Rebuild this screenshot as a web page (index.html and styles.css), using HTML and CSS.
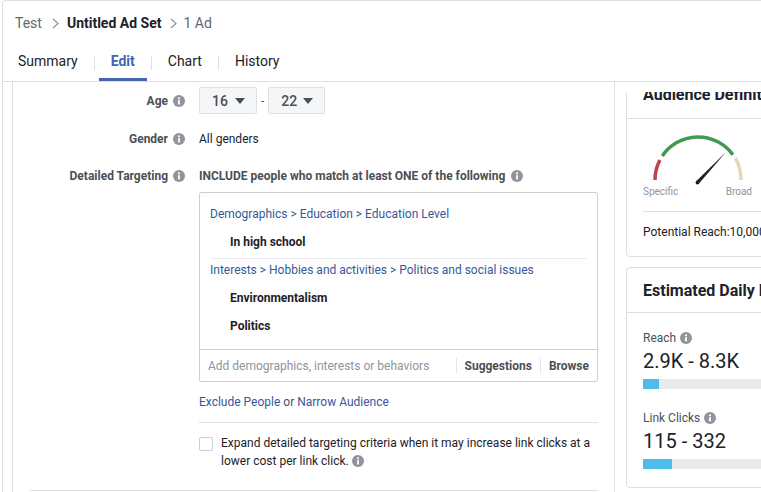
FILE: index.html
```html
<!DOCTYPE html>
<html>
<head>
<meta charset="utf-8">
<link rel="stylesheet" href="styles.css">
</head>
<body>
<div class="app">
  <header class="top">
    <div class="crumbs">
      <span class="crumb-muted">Test</span>
      <svg class="chev" width="7" height="11" viewBox="0 0 7 11"><polyline points="1,1 6,5.5 1,10" fill="none" stroke="#90949c" stroke-width="1.2"/></svg>
      <span class="crumb-strong">Untitled Ad Set</span>
      <svg class="chev chev2" width="7" height="11" viewBox="0 0 7 11"><polyline points="1,1 6,5.5 1,10" fill="none" stroke="#90949c" stroke-width="1.2"/></svg>
      <span class="crumb-muted">1 Ad</span>
    </div>
    <nav class="tabs">
      <span class="tab">Summary</span>
      <span class="tab-sep"></span>
      <span class="tab active">Edit</span>
      <span class="tab-sep"></span>
      <span class="tab">Chart</span>
      <span class="tab-sep"></span>
      <span class="tab">History</span>
    </nav>
  </header>

  <div class="main">
    <div class="left">
      <div class="card form">
        <div class="row row-age">
          <div class="lbl">Age <svg class="info" width="12" height="12" viewBox="0 0 12 12"><circle cx="6" cy="6" r="6" fill="#90949c"/><circle cx="6" cy="3.3" r="1.1" fill="#fff"/><rect x="5.1" y="5" width="1.8" height="4.6" rx="0.5" fill="#fff"/></svg></div>
          <div class="val age">
            <div class="select">16 <svg width="10" height="6" viewBox="0 0 10 6"><polygon points="0,0 10,0 5,6" fill="#4b4f56"/></svg></div>
            <span class="dash">-</span>
            <div class="select">22 <svg width="10" height="6" viewBox="0 0 10 6"><polygon points="0,0 10,0 5,6" fill="#4b4f56"/></svg></div>
          </div>
        </div>

        <div class="row row-gender">
          <div class="lbl">Gender <svg class="info" width="12" height="12" viewBox="0 0 12 12"><circle cx="6" cy="6" r="6" fill="#90949c"/><circle cx="6" cy="3.3" r="1.1" fill="#fff"/><rect x="5.1" y="5" width="1.8" height="4.6" rx="0.5" fill="#fff"/></svg></div>
          <div class="val plain">All genders</div>
        </div>

        <div class="row row-dt">
          <div class="lbl">Detailed Targeting <svg class="info" width="12" height="12" viewBox="0 0 12 12"><circle cx="6" cy="6" r="6" fill="#90949c"/><circle cx="6" cy="3.3" r="1.1" fill="#fff"/><rect x="5.1" y="5" width="1.8" height="4.6" rx="0.5" fill="#fff"/></svg></div>
          <div class="val">
            <div class="include">INCLUDE people who match at least ONE of the following <svg class="info" width="12" height="12" viewBox="0 0 12 12"><circle cx="6" cy="6" r="6" fill="#90949c"/><circle cx="6" cy="3.3" r="1.1" fill="#fff"/><rect x="5.1" y="5" width="1.8" height="4.6" rx="0.5" fill="#fff"/></svg></div>

            <div class="tbox">
              <div class="group g1">
                <div class="path">Demographics &gt; Education &gt; Education Level</div>
                <div class="item">In high school</div>
              </div>
              <div class="group g2">
                <div class="path">Interests &gt; Hobbies and activities &gt; Politics and social issues</div>
                <div class="item">Environmentalism</div>
                <div class="item">Politics</div>
              </div>
              <div class="tinput">
                <span class="ph">Add demographics, interests or behaviors</span>
                <span class="vsep"></span>
                <span class="act">Suggestions</span>
                <span class="vsep"></span>
                <span class="act">Browse</span>
              </div>
            </div>

            <div class="exclude"><span class="link">Exclude People</span> or <span class="link">Narrow Audience</span></div>
            <div class="hr"></div>
            <div class="expand">
              <span class="checkbox"></span>
              <p>Expand detailed targeting criteria when it may increase link clicks at a lower cost per link click. <svg class="info" width="12" height="12" viewBox="0 0 12 12"><circle cx="6" cy="6" r="6" fill="#90949c"/><circle cx="6" cy="3.3" r="1.1" fill="#fff"/><rect x="5.1" y="5" width="1.8" height="4.6" rx="0.5" fill="#fff"/></svg></p>
            </div>
          </div>
        </div>
        <div class="next-sep"></div>
      </div>
    </div>

    <div class="right">
      <div class="rclip">
        <div class="rstack">
          <section class="rcard">
            <h2 class="rhead">Audience Definition</h2>
            <div class="aud-body">
              <svg class="gauge" width="112" height="60" viewBox="0 0 112 60">
                <path d="M12 55 A43 43 0 0 1 16.9 35" fill="none" stroke="#b8474b" stroke-width="3.5"/>
                <path d="M19.3 31 A43 43 0 0 1 89.8 29.7" fill="none" stroke="#3f9a4f" stroke-width="3.5"/>
                <path d="M92.3 33.2 A43 43 0 0 1 98 55" fill="none" stroke="#e8d6b6" stroke-width="3.5"/>
                <polygon points="55.8,58.8 53.2,56.2 83,27" fill="#1d2129"/>
                <circle cx="54.5" cy="57.5" r="1.9" fill="#1d2129"/>
              </svg>
              <div class="gauge-labels"><span>Specific</span><span>Broad</span></div>
            </div>
            <div class="reach">Potential Reach:10,000,000 people</div>
          </section>

          <section class="rcard est">
            <h2 class="rhead">Estimated Daily Results</h2>
            <div class="est-body">
              <div class="metric">
                <div class="mlabel">Reach <svg class="info" width="12" height="12" viewBox="0 0 12 12"><circle cx="6" cy="6" r="6" fill="#90949c"/><circle cx="6" cy="3.3" r="1.1" fill="#fff"/><rect x="5.1" y="5" width="1.8" height="4.6" rx="0.5" fill="#fff"/></svg></div>
                <div class="mval">2.9K - 8.3K</div>
                <div class="bar"><div class="fill" style="width:16px"></div></div>
              </div>
              <div class="metric">
                <div class="mlabel">Link Clicks <svg class="info" width="12" height="12" viewBox="0 0 12 12"><circle cx="6" cy="6" r="6" fill="#90949c"/><circle cx="6" cy="3.3" r="1.1" fill="#fff"/><rect x="5.1" y="5" width="1.8" height="4.6" rx="0.5" fill="#fff"/></svg></div>
                <div class="mval">115 - 332</div>
                <div class="bar"><div class="fill" style="width:29px"></div></div>
              </div>
            </div>
          </section>
        </div>
      </div>
    </div>
  </div>
</div>
</body>
</html>
```

FILE: styles.css
```css
* { box-sizing: border-box; }
html, body { margin: 0; padding: 0; background: #fff; }
body {
  width: 761px;
  height: 492px;
  overflow: hidden;
  font-family: Roboto, "Liberation Sans", Arial, sans-serif;
  font-size: 12px;
  color: #1d2129;
}
.app { margin-left: 2px; width: 900px; }

/* header */
.top {
  border: 1px solid #dddfe2;
  border-right: none;
  border-top-left-radius: 4px;
  background: #fff;
}
.crumbs {
  display: flex;
  align-items: center;
  height: 43px;
  padding: 14px 0 13px 12px;
  font-size: 14px;
  line-height: 16px;
}
.crumb-muted { color: #606770; }
.crumb-strong { color: #1d2129; font-weight: 700; }
.chev { margin: 0 8px 0 10px; }
.chev2 { margin: 0 6px 0 9px; }

.tabs {
  display: flex;
  align-items: center;
  padding-left: 3px;
  height: 37px;
}
.tab {
  font-size: 14px;
  line-height: 16px;
  padding: 9px 12px 9px;
  border-bottom: 3px solid transparent;
  color: #1d2129;
}
.tab.active { color: #4267b2; font-weight: 700; border-bottom-color: #4267b2; }
.tab-sep { width: 1px; height: 14px; background: #dddfe2; margin: 0 4px 0 4px; }

/* main */
.main { display: flex; align-items: flex-start; }
.left {
  flex: none;
  width: 613px;
  height: 410px;
  border-left: 1px solid #dddfe2;
  padding-left: 9px;
}
.card.form {
  width: 603px;
  height: 410px;
  border-left: 1px solid #dddfe2;
  border-right: 1px solid #dddfe2;
  padding-top: 5px;
}
.row { display: flex; align-items: flex-start; }
.lbl {
  width: 172px;
  flex: none;
  display: flex;
  align-items: center;
  justify-content: flex-end;
  gap: 5px;
  color: #4b4f56;
  font-weight: 700;
  line-height: 16px;
}
.info { flex: none; display: inline-block; vertical-align: -2px; }
.val { margin-left: 14px; width: 399px; flex: none; }

.row-age .lbl { height: 27px; }
.age { display: flex; align-items: center; }
.select {
  display: flex;
  align-items: center;
  justify-content: space-between;
  height: 27px;
  width: 58px;
  padding: 0 11px 0 12px;
  background: #f5f6f7;
  border: 1px solid #dddfe2;
  border-radius: 2px;
  font-size: 14px;
  color: #4b4f56;
  font-weight: 500;
}
.select + .dash + .select { width: 57px; }
.dash { margin: 0 4px; color: #4b4f56; }

.row-gender { margin-top: 17px; }
.plain { line-height: 16px; color: #1d2129; }

.row-dt { margin-top: 21px; }
.include { color: #4b4f56; font-weight: 700; line-height: 16px; }
.include .info { margin-left: 3px; }

.tbox {
  margin-top: 8px;
  border: 1px solid #ccd0d5;
  border-radius: 2px;
}
.group { margin: 0 10px; }
.g1 { padding-top: 7px; padding-bottom: 2px; border-bottom: 1px solid #e9ebee; }
.g2 { padding-bottom: 9px; }
.path { color: #365899; line-height: 22px; padding: 3px 0; }
.g2 .path { padding-top: 0; }
.item { font-weight: 700; line-height: 28px; padding-left: 20px; color: #1d2129; }
.tinput {
  display: flex;
  align-items: center;
  height: 32px;
  border-top: 1px solid #ccd0d5;
  padding: 0 8px;
}
.ph { color: #90949c; flex: 1; }
.vsep { width: 1px; height: 16px; background: #e5e6e9; margin: 0 8px; }
.act { font-weight: 700; color: #4b4f56; }

.exclude { margin-top: 12px; line-height: 16px; color: #4b4f56; }
.link { color: #365899; }
.hr { height: 1px; background: #dddfe2; margin-top: 12px; }
.expand { display: flex; align-items: flex-start; margin-top: 11px; }
.checkbox {
  flex: none;
  width: 14px; height: 14px;
  border: 1px solid #ccd0d5;
  border-radius: 2px;
  margin-top: 3px;
}
.expand p {
  margin: 0 0 0 8px;
  line-height: 18px;
  color: #1d2129;
  font-size: 12px;
}
.next-sep { margin: 20px 0 0 17px; width: 568px; height: 1px; background: #dddfe2; }

/* right column */
.right { flex: none; width: 260px; padding: 10px 0 0 11px; }
.rclip { overflow: hidden; height: 420px; }
.rstack { margin-top: -23px; }
.rcard {
  border: 1px solid #dddfe2;
  border-radius: 4px;
  background: #fff;
  margin-bottom: 10px;
}
.rhead {
  margin: 0;
  height: 49px;
  padding: 0 16px;
  display: flex;
  align-items: center;
  font-size: 16px;
  font-weight: 700;
  color: #1d2129;
  border-bottom: 1px solid #dddfe2;
  white-space: nowrap;
}
.est .rhead { height: 45px; }
.aud-body { margin: 0 0 0 16px; padding-top: 6px; border-bottom: 1px solid #dddfe2; padding-bottom: 12px; }
.gauge { display: block; }
.gauge-labels {
  display: flex;
  justify-content: space-between;
  width: 109px;
  font-size: 10px;
  line-height: 14px;
  color: #90949c;
}
.reach { padding: 12px 0 16px 16px; line-height: 16px; color: #1d2129; white-space: nowrap; }

.est-body { padding: 17px 16px 18px; }
.metric + .metric { margin-top: 21px; }
.mlabel { color: #4b4f56; line-height: 16px; display: flex; align-items: center; gap: 4px; }
.mval { font-size: 20px; line-height: 30px; color: #1d2129; }
.bar { height: 10px; background: #e9ebee; margin-top: 3px; }
.fill { height: 10px; background: #4bbde8; }
```
